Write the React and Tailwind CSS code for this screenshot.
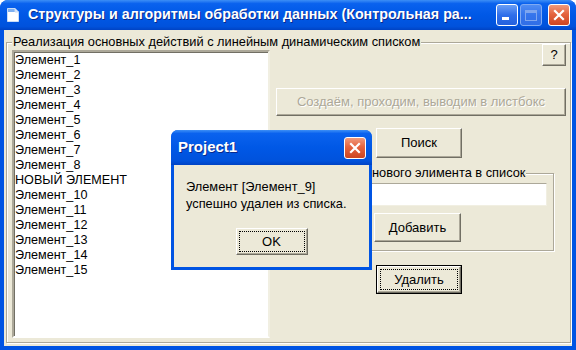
import React from 'react';

const items = [
  'Элемент_1', 'Элемент_2', 'Элемент_3', 'Элемент_4', 'Элемент_5',
  'Элемент_6', 'Элемент_7', 'Элемент_8', 'НОВЫЙ ЭЛЕМЕНТ', 'Элемент_10',
  'Элемент_11', 'Элемент_12', 'Элемент_13', 'Элемент_14', 'Элемент_15',
];

// classic 3D raised button
const Btn = ({ className = '', children, disabled, isDefault, focused }) => {
  const inner = (
    <div className="flex-1 self-stretch flex bg-[#ECE9D8] border border-t-white border-l-white border-r-[#716F64] border-b-[#716F64] shadow-[inset_-1px_-1px_0_#ACA899]">
      {focused ? (
        <div className="flex-1 m-[2px] border border-dotted border-black flex items-center justify-center text-[13px] text-black">
          {children}
        </div>
      ) : (
        <div className={`flex-1 flex items-center justify-center text-[13px] ${disabled ? 'text-[#ACA899] [text-shadow:1px_1px_0_#fff]' : 'text-black'}`}>
          {children}
        </div>
      )}
    </div>
  );
  return (
    <div className={`flex ${isDefault ? 'border border-black' : ''} ${className}`}>{inner}</div>
  );
};

const TitleButton = ({ kind }) => {
  if (kind === 'close') {
    return (
      <div className="w-[22px] h-[22px] rounded-[3px] border border-white bg-[linear-gradient(to_bottom,#f09a7c_0%,#e5643f_45%,#cc4521_100%)] flex items-center justify-center">
        <svg width="12" height="12" viewBox="0 0 12 12">
          <path d="M2 2 L10 10 M10 2 L2 10" stroke="#fff" strokeWidth="2.2" strokeLinecap="square" />
        </svg>
      </div>
    );
  }
  if (kind === 'max') {
    return (
      <div className="w-[22px] h-[22px] rounded-[3px] border border-[#7faaf3] bg-[linear-gradient(to_bottom,#4f8cf3_0%,#3574ec_50%,#306ee6_100%)] flex items-center justify-center">
        <div className="w-[12px] h-[11px] border border-[#7fa6ef] border-t-[3px]" />
      </div>
    );
  }
  return (
    <div className="w-[22px] h-[22px] rounded-[3px] border border-white bg-[linear-gradient(to_bottom,#6a9ef5_0%,#2f6fea_50%,#2461de_100%)] flex items-end pl-[5px] pb-[5px]">
      <div className="w-[7px] h-[3px] bg-white" />
    </div>
  );
};

const AppIcon = () => (
  <svg width="14" height="16" viewBox="0 0 14 16">
    <path d="M1.5 1.5 H9 L12.5 5 V14.5 H1.5 Z" fill="#fff" stroke="#c9dcf7" strokeWidth="1" />
    <rect x="2" y="2" width="7" height="3" fill="#7fb0f0" />
    <path d="M9 1.5 V5 H12.5" fill="#dce8f8" stroke="#c9dcf7" strokeWidth="1" />
  </svg>
);

const Dialog = () => (
  <div className="absolute left-[171px] top-[130px] w-[201px] h-[140px] rounded-t-[7px] bg-[#0054E3] flex flex-col overflow-hidden">
    <div className="h-[35px] shrink-0 flex items-center justify-between pl-[7px] pr-[6px] bg-[linear-gradient(to_bottom,#3d8ff6_0%,#0a62ee_10%,#0058e6_50%,#0052dc_88%,#0043c4_100%)]">
      <span className="text-white font-bold text-[15px] [text-shadow:1px_1px_0_#0a2a8c]">Project1</span>
      <TitleButton kind="close" />
    </div>
    <div className="flex-1 mx-[3px] mb-[3px] bg-[#ECE9D8] flex flex-col">
      <div className="pt-[13px] pl-[12px] text-[12.8px] leading-[17px] text-black">
        <div>Элемент [Элемент_9]</div>
        <div>успешно удален из списка.</div>
      </div>
      <Btn className="mt-[16px] mx-auto w-[72px] h-[27px]" focused>OK</Btn>
    </div>
  </div>
);

export default function App() {
  return (
    <div className="relative w-[576px] h-[350px] bg-white font-['Liberation_Sans',Arial,sans-serif] overflow-hidden">
      <div className="w-full h-full flex flex-col rounded-t-[8px] bg-[#0054E3] overflow-hidden">
        {/* title bar */}
        <div className="h-[30px] shrink-0 flex items-center pl-[6px] pr-[6px] bg-[linear-gradient(to_bottom,#3d8ff6_0%,#0a62ee_12%,#0058e6_50%,#0052dc_88%,#0043c4_100%)]">
          <AppIcon />
          <span className="ml-[8px] text-white font-bold text-[14.3px] whitespace-nowrap [text-shadow:1px_1px_0_#0a2a8c]">
            Структуры и алгоритмы обработки данных (Контрольная ра...
          </span>
          <div className="ml-auto flex gap-[2px] items-center">
            <TitleButton kind="min" />
            <TitleButton kind="max" />
            <div className="w-[2px]" />
            <TitleButton kind="close" />
          </div>
        </div>

        {/* client area */}
        <div className="flex-1 mx-[4px] mb-[4px] bg-[#ECE9D8] flex flex-col">
          <div className="relative mt-[12px] ml-[2px] mr-[1px] h-[301px] border border-[#ACA899] shadow-[inset_1px_1px_0_#fff,1px_1px_0_#fff] flex pl-[5px] pr-[4px] gap-[6px]">
            <span className="absolute left-[5px] -top-[8px] bg-[#ECE9D8] px-[1px] text-[12.8px] leading-[14px] text-black whitespace-nowrap">
              Реализация основных действий с линейным динамическим списком
            </span>

            {/* list box */}
            <div className="mt-[7px] w-[258px] h-[288px] bg-white border-2 border-t-[#ACA899] border-l-[#ACA899] border-b-white border-r-[#F1EFE2] shadow-[inset_1px_1px_0_#716F64] pt-[1px] pl-[1px]">
              {items.map((it) => (
                <div key={it} className="text-[12.6px] leading-[15px] text-black whitespace-nowrap">{it}</div>
              ))}
            </div>

            {/* controls */}
            <div className="flex-1 flex flex-col pt-[1px]">
              <Btn className="self-end w-[24px] h-[22px]">?</Btn>
              <Btn className="mt-[22px] h-[28px]" disabled>Создаём, проходим, выводим в листбокс</Btn>
              <Btn className="mt-[12px] ml-[100px] w-[86px] h-[30px]">Поиск</Btn>

              <div className="relative mt-[15px] ml-[6px] mr-[12px] h-[78px] border border-[#ACA899] shadow-[inset_1px_1px_0_#fff,1px_1px_0_#fff] flex flex-col">
                <span className="absolute left-[12px] -top-[8px] bg-[#ECE9D8] px-[1px] text-[12.8px] leading-[14px] text-black whitespace-nowrap">
                  Добавление нового элимента в список
                </span>
                <div className="mt-[9px] ml-[7px] mr-[6px] h-[23px] bg-white border border-t-[#ACA899] border-l-[#ACA899] border-b-[#F1EFE2] border-r-[#F1EFE2]" />
                <Btn className="mt-[7px] ml-[91px] w-[87px] h-[29px]">Добавить</Btn>
              </div>

              <Btn className="mt-[14px] ml-[100px] w-[86px] h-[29px]" isDefault focused>Удалить</Btn>
            </div>
          </div>
        </div>
      </div>
      <Dialog />
    </div>
  );
}
